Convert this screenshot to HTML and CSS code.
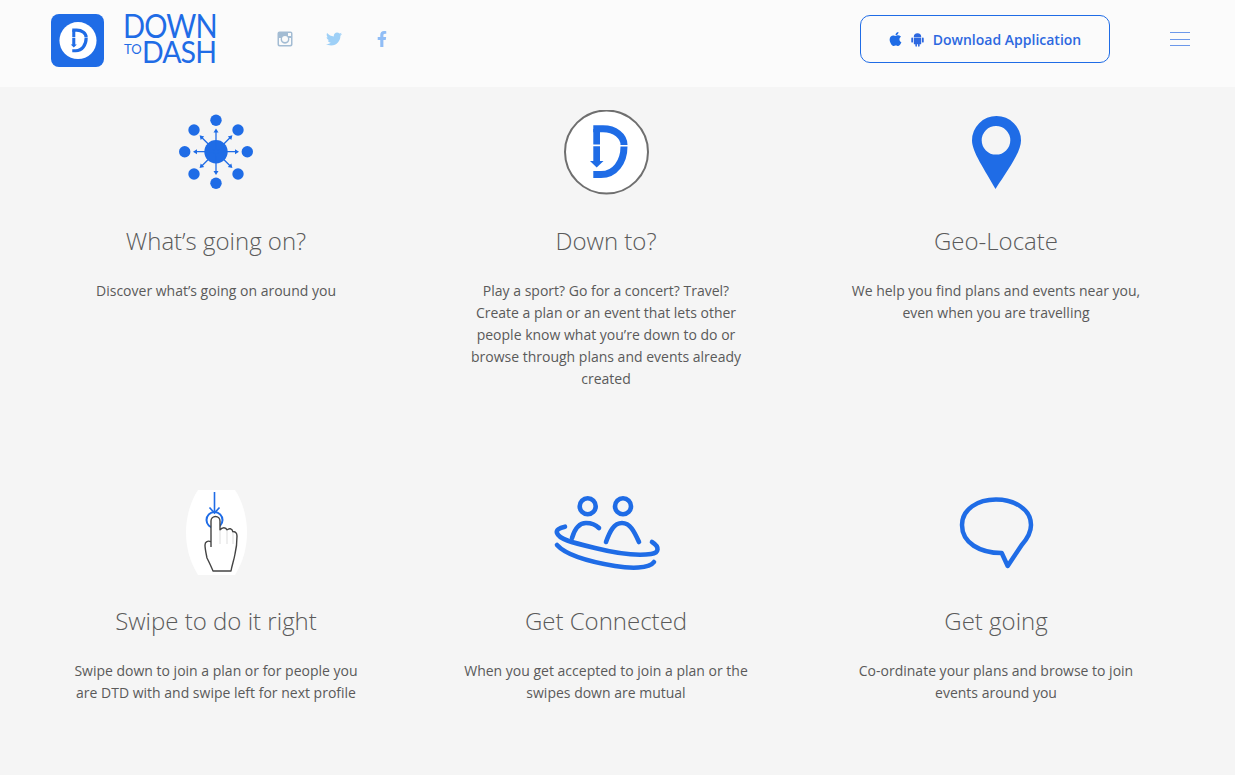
FILE: index.html
```html
<!DOCTYPE html>
<html lang="en">
  <head>
    <meta charset="UTF-8" />
    <title>Down To Dash</title>
    <link rel="stylesheet" href="styles.css">
  </head>
  <body>
    <header class="header">
      <a class="logo-icon" href="#">
        <svg class="logo-dee" viewBox="9 9 84 84">
          <circle cx="51" cy="50" r="41" fill="#fff" />
          <path class="dee-stroke" d="M38.3 26.8H48C60 26.8 69 34 69 43" />
          <path class="dee-stroke" d="M69 44.5C69 60 60 72.6 46 72.6H38.3" />
          <path class="dee-fill" d="M38.3 27H45V42.6H38.3ZM38.3 44.2H45V59H48.5L41.7 65.5L35 59H38.3Z" />
        </svg>
      </a>
      <a class="logo-word" href="#">
        <span class="logo-down">DOWN</span>
        <span class="logo-bottom">
          <span class="logo-to">TO</span>
          <span class="logo-dash">DASH</span>
        </span>
      </a>
      <div class="social">
        <a href="#" class="social-link">
          <svg class="icon-instagram" viewBox="0 0 16 16">
            <path fill-rule="evenodd" d="M2.5 0.5H13.5A2 2 0 0 1 15.5 2.5V13.5A2 2 0 0 1 13.5 15.5H2.5A2 2 0 0 1 0.5 13.5V2.5A2 2 0 0 1 2.5 0.5ZM11 2V5H14V2ZM2 7V13A1 1 0 0 0 3 14H13A1 1 0 0 0 14 13V7H12.2A4.4 4.4 0 1 1 3.8 7ZM8 5A3 3 0 1 0 8 11A3 3 0 1 0 8 5Z" />
          </svg>
        </a>
        <a href="#" class="social-link">
          <svg class="icon-twitter" viewBox="0 0 512 512">
            <path d="M459.37 151.716c.325 4.548.325 9.097.325 13.645 0 138.72-105.583 298.558-298.558 298.558-59.452 0-114.68-17.219-161.137-47.106 8.447.974 16.568 1.299 25.34 1.299 49.055 0 94.213-16.568 130.274-44.832-46.132-.975-84.792-31.188-98.112-72.772 6.498.974 12.995 1.624 19.818 1.624 9.421 0 18.843-1.3 27.614-3.573-48.081-9.747-84.143-51.98-84.143-102.985v-1.299c13.969 7.797 30.214 12.67 47.431 13.319-28.264-18.843-46.781-51.005-46.781-87.391 0-19.492 5.197-37.36 14.294-52.954 51.655 63.675 129.3 105.258 216.365 109.807-1.624-7.797-2.599-15.918-2.599-24.04 0-57.828 46.782-104.934 104.934-104.934 30.213 0 57.502 12.67 76.67 33.137 23.715-4.548 46.456-13.32 66.599-25.34-7.798 24.366-24.366 44.833-46.132 57.827 21.117-2.273 41.584-8.122 60.426-16.243-14.292 20.791-32.161 39.308-52.628 54.253z" />
          </svg>
        </a>
        <a href="#" class="social-link">
          <svg class="icon-facebook" viewBox="0 0 320 512">
            <path d="M279.14 288l14.22-92.66h-88.91v-60.13c0-25.35 12.42-50.06 52.24-50.06h40.42V6.26S260.43 0 225.36 0c-73.22 0-121.08 44.38-121.08 124.72v70.62H22.89V288h81.39v224h100.17V288z" />
          </svg>
        </a>
      </div>
      <a href="#" class="download-btn">
        <svg class="icon-apple" viewBox="0 0 384 512">
          <path d="M318.7 268.7c-.2-36.7 16.4-64.4 50-84.8-18.8-26.9-47.2-41.7-84.7-44.6-35.5-2.8-74.3 20.7-88.5 20.7-15 0-49.4-19.7-76.4-19.7C63.3 141.2 4 184.8 4 273.5q0 39.3 14.4 81.2c12.8 36.7 59 126.7 107.2 125.2 25.2-.6 43-17.9 75.8-17.9 31.8 0 48.3 17.9 76.4 17.9 48.6-.7 90.4-82.5 102.6-119.3-65.2-30.7-61.7-90-61.7-91.9zm-56.6-164.2c27.3-32.4 24.8-61.9 24-72.5-24.1 1.4-52 16.4-67.9 34.9-17.5 19.8-27.8 44.3-25.6 71.9 26.1 2 49.9-11.4 69.5-34.3z" />
        </svg>
        <svg class="icon-android" viewBox="0 0 14 16">
          <path d="M3 5.2A4 4 0 0 1 11 5.2ZM3 5.9H11V12.3A.9 .9 0 0 1 10.1 13.2H9.3V15.1A.9 .9 0 0 1 7.6 15.1V13.2H6.4V15.1A.9 .9 0 0 1 4.7 15.1V13.2H3.9A.9 .9 0 0 1 3 12.3ZM1.2 5.9A.9 .9 0 0 1 2.2 6.8V10.4A.9 .9 0 0 1 .3 10.4V6.8A.9 .9 0 0 1 1.2 5.9ZM12.8 5.9A.9 .9 0 0 1 13.7 6.8V10.4A.9 .9 0 0 1 11.8 10.4V6.8A.9 .9 0 0 1 12.8 5.9Z" />
        </svg>
        <span class="download-text">Download Application</span>
      </a>
      <button class="menu-btn" aria-label="Menu">
        <span></span>
        <span></span>
        <span></span>
      </button>
    </header>

    <main class="features">
      <section class="feature">
        <div class="feature-icon">
          <svg class="icon-network" viewBox="0 5 92 85">
            <g class="blue-fill">
              <circle cx="46" cy="46.7" r="11.7" />
              <circle cx="46" cy="15.3" r="5.7" />
              <circle cx="77.3" cy="46.7" r="5.7" />
              <circle cx="46" cy="78.3" r="5.7" />
              <circle cx="14.7" cy="46.7" r="5.7" />
              <circle cx="24" cy="25" r="5.7" />
              <circle cx="68" cy="25" r="5.7" />
              <circle cx="68" cy="69" r="5.7" />
              <circle cx="24" cy="69" r="5.7" />
              <path d="M46 23.5L48.5 27.5H43.5ZM46 70L48.5 66H43.5ZM23 46.7L27 44.2V49.2ZM69 46.7L65 44.2V49.2ZM29.6 30.3L34.2 31.4L30.7 34.9ZM62.4 30.3L57.8 31.4L61.3 34.9ZM62.4 63.1L57.8 62L61.3 58.5ZM29.6 63.1L34.2 62L30.7 58.5Z" />
            </g>
            <path class="network-line" d="M46 26V67M25 46.7H67M31 31.7L61 61.7M61 31.7L31 61.7" />
          </svg>
        </div>
        <h3 class="feature-title">What’s going on?</h3>
        <p class="feature-text">Discover what’s going on around you</p>
      </section>

      <section class="feature">
        <div class="feature-icon">
          <svg class="icon-dee" viewBox="0 8 102 85">
            <circle class="dee-ring" cx="51.5" cy="50" r="41.5" />
            <path class="dee-stroke" d="M38.3 26.8H48C60 26.8 69 34 69 43" />
            <path class="dee-stroke" d="M69 44.5C69 60 60 72.6 46 72.6H38.3" />
            <path class="dee-fill" d="M38.3 27H45V42.6H38.3ZM38.3 44.2H45V59H48.5L41.7 65.5L35 59H38.3Z" />
          </svg>
        </div>
        <h3 class="feature-title">Down to?</h3>
        <p class="feature-text">Play a sport? Go for a concert? Travel? Create a plan or an event that lets other people know what you’re down to do or browse through plans and events already created</p>
      </section>

      <section class="feature">
        <div class="feature-icon">
          <svg class="icon-pin" viewBox="0 5 72 85">
            <path class="blue-fill" fill-rule="evenodd" d="M36.5 11A24.5 24.5 0 0 1 61 35.5C61 47 48 65 35.5 84C25 65 12 47 12 35.5A24.5 24.5 0 0 1 36.5 11ZM36 21A14.3 14.3 0 1 0 36 49.6A14.3 14.3 0 1 0 36 21Z" />
          </svg>
        </div>
        <h3 class="feature-title">Geo-Locate</h3>
        <p class="feature-text">We help you find plans and events near you, even when you are travelling</p>
      </section>

      <section class="feature">
        <div class="feature-icon">
          <svg class="icon-hand" viewBox="0 0 61 85">
            <path class="hand-back" d="M12 0H49C57 12 61 28 61 42C61 58 57 72 49 85H12C4 72 0 58 0 42C0 28 4 12 12 0Z" />
            <circle class="hand-ring" cx="28.5" cy="30" r="8" />
            <path class="hand-arrow" d="M28.5 2V23M23.5 17.5L28.5 23L33.5 17.5" />
            <path class="hand-shape" d="M25 57V31A4.5 4.5 0 0 1 34 31V40C36 37 40 37 41 40C43 38 46 38 47 42C49 41 51 43 51 46C51 54 50 60 49 64C48 70 46 75 45 81H27C25 76 23 72 21 68C20 63 19 59 19 55C19 52 22 50 25 52" />
            <path class="hand-fold" d="M34 40V54M41 40V54M47 42V54" />
          </svg>
        </div>
        <h3 class="feature-title">Swipe to do it right</h3>
        <p class="feature-text">Swipe down to join a plan or for people you are DTD with and swipe left for next profile</p>
      </section>

      <section class="feature">
        <div class="feature-icon">
          <svg class="icon-people" viewBox="0 5 122 85">
            <g class="people-line">
              <circle cx="42.7" cy="21.3" r="8" />
              <circle cx="78" cy="21.3" r="8" />
              <path d="M27 53C30 43 34 38 41 38C47 38 50 39 54 43" />
              <path d="M61 57C65 46 69 38 77 38C85 38 89 46 94 57" />
              <path d="M20 41.7C14 43 11 45 12 48C14 54 25 57 50 63C70 68 92 71 106 69C114 68 115 62 107 57" />
              <path d="M12 60C20 69 40 76 70 81C85 83.5 104 84 109 77" />
            </g>
          </svg>
        </div>
        <h3 class="feature-title">Get Connected</h3>
        <p class="feature-text">When you get accepted to join a plan or the swipes down are mutual</p>
      </section>

      <section class="feature">
        <div class="feature-icon">
          <svg class="icon-chat" viewBox="0 5 92 85">
            <path class="chat-line" d="M51.7 68C30 68 12 58 12 40C12 24 28 14.5 46 14.5C64 14.5 81 24 81 40C81 48 77 54 71.7 60L57.7 81Z" />
          </svg>
        </div>
        <h3 class="feature-title">Get going</h3>
        <p class="feature-text">Co-ordinate your plans and browse to join events around you</p>
      </section>
    </main>
  </body>
</html>
```

FILE: styles.css
```css
body {
  margin: 0;
  background: #f5f5f5;
  font-family: "Open Sans", Arial, sans-serif;
  color: #5a5a5a;
}
a {
  text-decoration: none;
}

/* header */
.header {
  display: flex;
  align-items: center;
  box-sizing: border-box;
  height: 87px;
  padding: 0 0 9px 51px;
  background: #fbfbfb;
}
.logo-icon {
  display: flex;
  align-items: center;
  justify-content: center;
  width: 53px;
  height: 53px;
  margin-top: 3px;
  border-radius: 8px;
  background: #1f6ce6;
}
.logo-dee {
  width: 38px;
  height: 38px;
}
.logo-word {
  display: flex;
  flex-direction: column;
  width: 92px;
  margin: 0 0 4px 19px;
  color: #1f6ce6;
  font-family: Lato, "Open Sans", sans-serif;
}
.logo-down {
  font-size: 33px;
  line-height: 27px;
  letter-spacing: -1px;
  white-space: nowrap;
  transform: scaleX(0.88);
  transform-origin: left;
}
.logo-bottom {
  display: flex;
  align-items: flex-start;
}
.logo-to {
  width: 22px;
  padding: 2px 0 0 1px;
  box-sizing: border-box;
  font-size: 13px;
  line-height: 16px;
}
.logo-dash {
  font-size: 31px;
  line-height: 24px;
  letter-spacing: -1px;
  transform: scaleX(0.92);
  transform-origin: left;
}
.social {
  display: flex;
  align-items: center;
  gap: 32.5px;
  margin-left: 62px;
}
.social-link {
  display: flex;
  justify-content: center;
  width: 16px;
}
.icon-instagram {
  width: 16px;
  height: 16px;
  fill: #a3bcd3;
}
.icon-twitter {
  width: 16px;
  height: 16px;
  fill: #9ed0f7;
}
.icon-facebook {
  width: 10px;
  height: 16px;
  fill: #90bdf6;
}
.download-btn {
  display: flex;
  align-items: center;
  justify-content: center;
  box-sizing: border-box;
  width: 250px;
  height: 48px;
  margin-left: auto;
  border: 1px solid #1f6ce6;
  border-radius: 10px;
  color: #2d68e0;
  font-size: 14px;
  font-weight: 600;
}
.icon-apple {
  width: 13px;
  height: 16px;
  fill: #1f6ce6;
}
.icon-android {
  width: 13px;
  height: 15px;
  margin-left: 9px;
  fill: #2d68e0;
}
.download-text {
  margin-left: 9px;
}
.menu-btn {
  display: flex;
  flex-direction: column;
  gap: 5.5px;
  width: 20px;
  margin: 0 45px 0 60px;
  padding: 0;
  border: 0;
  background: none;
}
.menu-btn span {
  display: block;
  height: 1px;
  background: #6c98ea;
}

/* feature grid */
.features {
  display: grid;
  grid-template-columns: repeat(3, 390px);
  grid-template-rows: 380px auto;
  padding: 23px 0 0 21px;
}
.feature {
  text-align: center;
}
.feature-icon {
  display: flex;
  justify-content: center;
  height: 85px;
}
.feature-title {
  margin: 29px 0 0;
  font-size: 24px;
  font-weight: 300;
  line-height: 34px;
  color: #5a5a5a;
}
.feature-text {
  width: 290px;
  margin: 22px auto 0;
  font-size: 14px;
  line-height: 22px;
  color: #5a5a5a;
}

/* feature icons */
.blue-fill {
  fill: #1f6ce6;
}
.icon-network {
  width: 92px;
  height: 85px;
}
.network-line {
  fill: none;
  stroke: #1f6ce6;
  stroke-width: 1.3;
}
.icon-dee {
  width: 102px;
  height: 85px;
}
.dee-ring {
  fill: #fff;
  stroke: #6f6f6f;
  stroke-width: 2;
}
.dee-stroke {
  fill: none;
  stroke: #1f6ce6;
  stroke-width: 7;
}
.dee-fill {
  fill: #1f6ce6;
}
.icon-pin {
  width: 72px;
  height: 85px;
}
.icon-hand {
  width: 61px;
  height: 85px;
}
.hand-back {
  fill: #fff;
}
.hand-ring {
  fill: none;
  stroke: #1f6ce6;
  stroke-width: 2;
}
.hand-arrow {
  fill: none;
  stroke: #1f6ce6;
  stroke-width: 1.6;
}
.hand-shape {
  fill: #fff;
  stroke: #444;
  stroke-width: 1.4;
  stroke-linejoin: round;
}
.hand-fold {
  fill: none;
  stroke: #ddd;
  stroke-width: 1;
}
.icon-people {
  width: 122px;
  height: 85px;
}
.people-line {
  fill: none;
  stroke: #1f6ce6;
  stroke-width: 4.6;
  stroke-linecap: round;
}
.icon-chat {
  width: 92px;
  height: 85px;
}
.chat-line {
  fill: none;
  stroke: #1f6ce6;
  stroke-width: 4.5;
  stroke-linejoin: round;
}
```
